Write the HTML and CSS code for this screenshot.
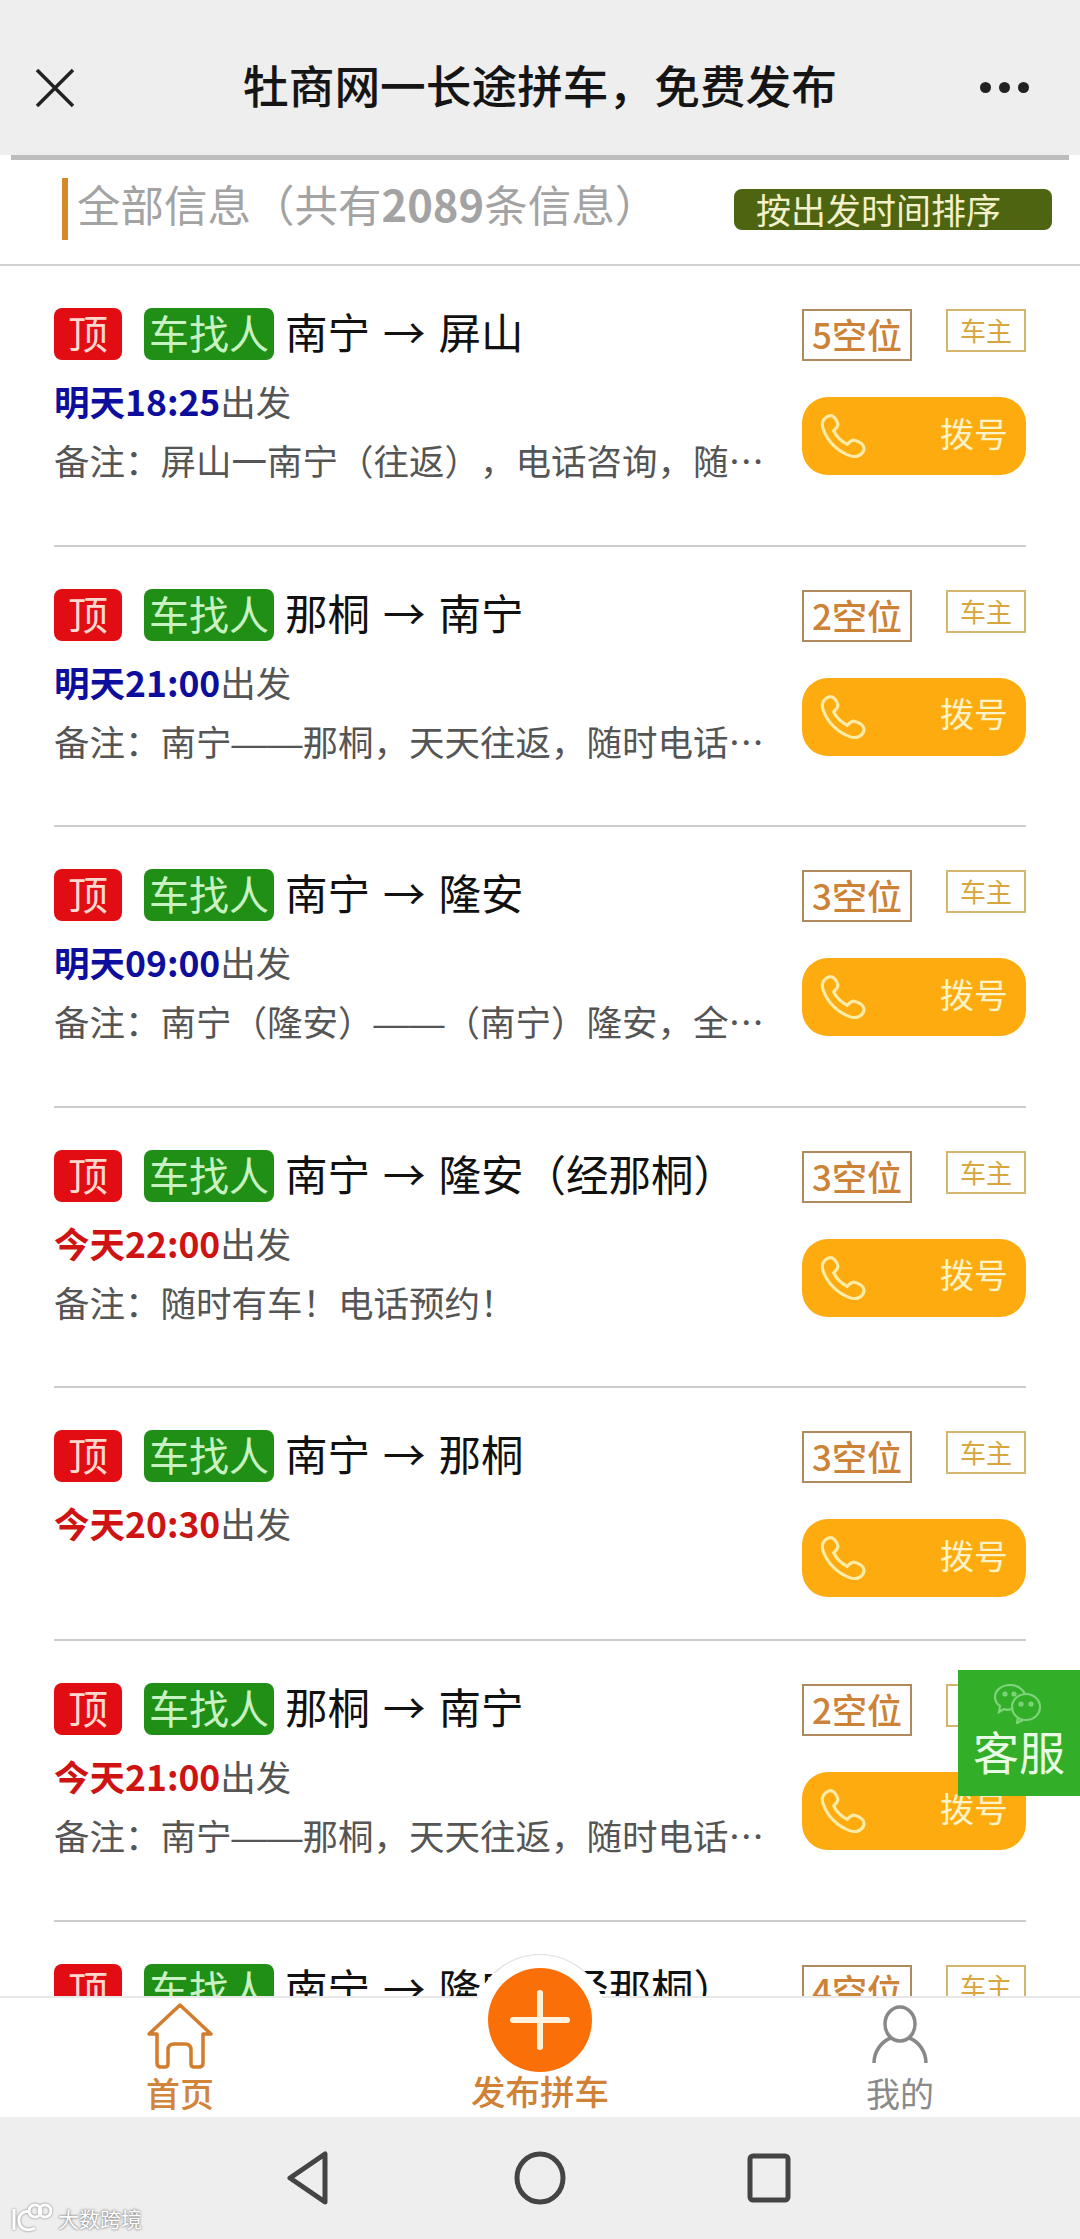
FILE: index.html
```html
<!DOCTYPE html>
<html>
<head lang="zh">
<meta charset="UTF-8">
<title>壮商网一长途拼车，免费发布</title>
<link rel="stylesheet" href="styles.css">
</head>
<body>
<div class="page">
    <div class="titlebar">
        <svg class="close" width="40" height="40" viewBox="0 0 40 40"><path d="M2 2L38 38M38 2L2 38"/></svg>
        <div class="title">牡商网一长途拼车，免费发布</div>
        <div class="more"><i></i><i></i><i></i></div>
    </div>
    <div class="titleline"></div>
    <div class="summary">
        <div class="summary_text">全部信息（共有<b>2089</b>条信息）</div>
        <div class="sort">按出发时间排序</div>
    </div>
    <div class="list">
        <div class="item">
            <div class="info">
                <div class="route"><span class="top_tag">顶</span><span class="type_tag">车找人</span><span class="way">南宁 → 屏山</span></div>
                <div class="time"><b class="blue">明天18:25</b>出发</div>
                <div class="note">备注：屏山一南宁（往返），电话咨询，随时发车欢迎来电</div>
            </div>
            <div class="side">
                <div class="side_top"><span class="seat">5空位</span><span class="owner">车主</span></div>
                <div class="call">
                    <svg class="phone" width="46" height="46" viewBox="0 0 44 44"><path d="M8 3C3 5 1 10 3 15C7 27 17 37 29 41C35 43 41 40 42 35C43 31 38 27 33 26C30 25.500 28 28 26 30C20 27 16 23 13 17C15 15 18 13 17 10C16 6 12 1 8 3Z"/></svg>
                    <span>拨号</span>
                </div>
            </div>
        </div>
        <div class="item">
            <div class="info">
                <div class="route"><span class="top_tag">顶</span><span class="type_tag">车找人</span><span class="way">那桐 → 南宁</span></div>
                <div class="time"><b class="blue">明天21:00</b>出发</div>
                <div class="note">备注：南宁<span class="dash">——</span>那桐，天天往返，随时电话预约欢迎来电</div>
            </div>
            <div class="side">
                <div class="side_top"><span class="seat">2空位</span><span class="owner">车主</span></div>
                <div class="call">
                    <svg class="phone" width="46" height="46" viewBox="0 0 44 44"><path d="M8 3C3 5 1 10 3 15C7 27 17 37 29 41C35 43 41 40 42 35C43 31 38 27 33 26C30 25.500 28 28 26 30C20 27 16 23 13 17C15 15 18 13 17 10C16 6 12 1 8 3Z"/></svg>
                    <span>拨号</span>
                </div>
            </div>
        </div>
        <div class="item">
            <div class="info">
                <div class="route"><span class="top_tag">顶</span><span class="type_tag">车找人</span><span class="way">南宁 → 隆安</span></div>
                <div class="time"><b class="blue">明天09:00</b>出发</div>
                <div class="note">备注：南宁（隆安）<span class="dash">——</span>（南宁）隆安，全天发车欢迎来电</div>
            </div>
            <div class="side">
                <div class="side_top"><span class="seat">3空位</span><span class="owner">车主</span></div>
                <div class="call">
                    <svg class="phone" width="46" height="46" viewBox="0 0 44 44"><path d="M8 3C3 5 1 10 3 15C7 27 17 37 29 41C35 43 41 40 42 35C43 31 38 27 33 26C30 25.500 28 28 26 30C20 27 16 23 13 17C15 15 18 13 17 10C16 6 12 1 8 3Z"/></svg>
                    <span>拨号</span>
                </div>
            </div>
        </div>
        <div class="item">
            <div class="info">
                <div class="route"><span class="top_tag">顶</span><span class="type_tag">车找人</span><span class="way">南宁 → 隆安（经那桐）</span></div>
                <div class="time"><b class="red">今天22:00</b>出发</div>
                <div class="note">备注：随时有车！电话预约！</div>
            </div>
            <div class="side">
                <div class="side_top"><span class="seat">3空位</span><span class="owner">车主</span></div>
                <div class="call">
                    <svg class="phone" width="46" height="46" viewBox="0 0 44 44"><path d="M8 3C3 5 1 10 3 15C7 27 17 37 29 41C35 43 41 40 42 35C43 31 38 27 33 26C30 25.500 28 28 26 30C20 27 16 23 13 17C15 15 18 13 17 10C16 6 12 1 8 3Z"/></svg>
                    <span>拨号</span>
                </div>
            </div>
        </div>
        <div class="item">
            <div class="info">
                <div class="route"><span class="top_tag">顶</span><span class="type_tag">车找人</span><span class="way">南宁 → 那桐</span></div>
                <div class="time"><b class="red">今天20:30</b>出发</div>
            </div>
            <div class="side">
                <div class="side_top"><span class="seat">3空位</span><span class="owner">车主</span></div>
                <div class="call">
                    <svg class="phone" width="46" height="46" viewBox="0 0 44 44"><path d="M8 3C3 5 1 10 3 15C7 27 17 37 29 41C35 43 41 40 42 35C43 31 38 27 33 26C30 25.500 28 28 26 30C20 27 16 23 13 17C15 15 18 13 17 10C16 6 12 1 8 3Z"/></svg>
                    <span>拨号</span>
                </div>
            </div>
        </div>
        <div class="item">
            <div class="info">
                <div class="route"><span class="top_tag">顶</span><span class="type_tag">车找人</span><span class="way">那桐 → 南宁</span></div>
                <div class="time"><b class="red">今天21:00</b>出发</div>
                <div class="note">备注：南宁<span class="dash">——</span>那桐，天天往返，随时电话预约欢迎来电</div>
            </div>
            <div class="side">
                <div class="side_top"><span class="seat">2空位</span><span class="owner">车主</span></div>
                <div class="call">
                    <svg class="phone" width="46" height="46" viewBox="0 0 44 44"><path d="M8 3C3 5 1 10 3 15C7 27 17 37 29 41C35 43 41 40 42 35C43 31 38 27 33 26C30 25.500 28 28 26 30C20 27 16 23 13 17C15 15 18 13 17 10C16 6 12 1 8 3Z"/></svg>
                    <span>拨号</span>
                </div>
            </div>
        </div>
        <div class="item">
            <div class="info">
                <div class="route"><span class="top_tag">顶</span><span class="type_tag">车找人</span><span class="way">南宁 → 隆安（经那桐）</span></div>
            </div>
            <div class="side">
                <div class="side_top"><span class="seat">4空位</span><span class="owner">车主</span></div>
            </div>
        </div>
    </div>
    <div class="tabbar">
        <div class="tab tab_home">
            <svg width="70" height="68" viewBox="-3 -3 70 68"><path d="M9 29H1L32 0L63 29H55V58Q55 62 51 62H46Q43 62 43 59V45Q43 39 37 39H26Q20 39 20 45V59Q20 62 17 62H13Q9 62 9 58Z"/></svg>
            <span>首页</span>
        </div>
        <div class="tab tab_add">
            <div class="add_ring"></div>
            <div class="add_btn">
                <svg width="60" height="60" viewBox="0 0 60 60"><path d="M30 3V57M3 30H57"/></svg>
            </div>
            <span>发布拼车</span>
        </div>
        <div class="tab tab_me">
            <svg width="56" height="60" viewBox="0 0 56 60"><ellipse cx="28" cy="19" rx="15" ry="17"/><path d="M2 58C2 46 10 36 19 33M54 58C54 46 46 36 37 33"/></svg>
            <span>我的</span>
        </div>
    </div>
    <div class="navbar">
        <svg class="nav_back" width="44" height="54" viewBox="0 0 44 54"><path d="M39 3V51L4 27Z"/></svg>
        <svg width="54" height="54" viewBox="0 0 54 54"><ellipse cx="27" cy="27" rx="23" ry="24"/></svg>
        <svg width="44" height="50" viewBox="0 0 44 50"><rect x="3" y="3" width="38" height="44" rx="3"/></svg>
    </div>
    <div class="service">
        <svg width="50" height="40" viewBox="0 0 50 40"><path d="M17 25C15 26 12 26 10 25L5 28L6 22C3 20 1 17 1 13C1 6 8 1 16 1C23 1 29 5 31 10"/><ellipse cx="32" cy="23" rx="14" ry="13"/><path d="M24 34L23 39L29 36"/><circle cx="11" cy="10" r="1.500"/><circle cx="20" cy="10" r="1.500"/><circle cx="27" cy="20" r="1.500"/><circle cx="37" cy="20" r="1.500"/></svg>
        <div class="service_text">客服</div>
    </div>
    <div class="mark">
        <svg width="42" height="30" viewBox="0 0 42 30"><path d="M4 6V27M20 9C12 7 8 13 9 19C10 26 18 29 25 25"/><circle cx="25" cy="8" r="6"/><circle cx="35" cy="8" r="6"/></svg>
        <span>大数跨境</span>
    </div>
</div>
</body>
</html>
```

FILE: styles.css
```css
*{
    margin:0px;
    padding:0px;
    box-sizing:border-box;
}
body{
    background:#fff;
    font-family:"Noto Sans CJK SC","Liberation Sans",sans-serif;
    text-spacing-trim:space-all;
}
.page{
    position:relative;
    width:1080px;
    height:2239px;
    display:flex;
    flex-direction:column;
    overflow:hidden;
}

/* title bar */
.titlebar{
    height:155px;
    padding:20px 35px 0 35px;
    background:#eee;
    display:grid;
    grid-template-columns:1fr auto 1fr;
    align-items:center;
}
.close{
    fill:none;
    stroke:#222;
    stroke-width:3.500;
}
.title{
    font-size:45.700px;
    font-weight:500;
    color:#151515;
    line-height:60px;
    padding-bottom:8px;
}
.more{
    display:flex;
    gap:8px;
    justify-self:end;
    margin-right:16px;
}
.more i{
    width:11px;
    height:11px;
    border-radius:50%;
    background:#222;
}
.titleline{
    height:5px;
    margin:0 11px;
    background:#bdbdbd;
}

/* summary row */
.summary{
    height:106px;
    padding:0 28px 6px 62px;
    border-bottom:2px solid #d0d0d0;
    display:flex;
    align-items:center;
    justify-content:space-between;
}
.summary_text{
    height:62px;
    line-height:52px;
    padding-left:9px;
    border-left:6px solid #d48a2a;
    font-size:43.500px;
    color:#a3a3a3;
}
.sort{
    width:318px;
    height:41px;
    line-height:40px;
    padding-left:22px;
    border-radius:8px;
    background:#4d6410;
    color:#f3f0cc;
    font-size:35px;
    white-space:nowrap;
}

/* list */
.list{
    flex:1;
    min-height:0;
    overflow:hidden;
}
.item{
    margin:0 54px;
    padding:42px 0 42px;
    border-bottom:2px solid #ccc;
    display:flex;
    justify-content:space-between;
}
.info{
    flex:1;
    min-width:0;
    padding-right:34px;
}
.route{
    height:52px;
    display:flex;
    align-items:center;
    white-space:nowrap;
}
.top_tag{
    width:68px;
    height:52px;
    line-height:48px;
    text-align:center;
    border-radius:8px;
    background:#e20d12;
    color:#ffd9d0;
    font-size:40px;
}
.type_tag{
    width:130px;
    height:52px;
    line-height:48px;
    margin-left:22px;
    text-align:center;
    border-radius:8px;
    background:#1f8f16;
    color:#c8f2c2;
    font-size:40px;
}
.way{
    margin-left:11px;
    padding-bottom:7px;
    font-size:42.500px;
    word-spacing:3.500px;
    color:#111;
}
.time{
    height:48px;
    line-height:48px;
    margin-top:17px;
    font-size:35.500px;
    color:#555;
}
.blue{
    color:#0d0d9e;
}
.red{
    color:#cf1212;
}
.note{
    height:50px;
    line-height:50px;
    margin-top:10px;
    margin-bottom:17.500px;
    font-size:35.500px;
    color:#555;
    white-space:nowrap;
    overflow:hidden;
    text-overflow:ellipsis;
}
.dash{
    font-family:"Liberation Sans",sans-serif;
}
.side{
    width:224px;
    margin-top:1px;
    flex-shrink:0;
}
.side_top{
    display:flex;
    justify-content:space-between;
    align-items:flex-start;
}
.seat{
    width:110px;
    height:52px;
    line-height:46px;
    text-align:center;
    border:2px solid #b08a5a;
    color:#cc8237;
    font-size:35px;
    font-weight:500;
}
.owner{
    width:80px;
    height:43px;
    line-height:38px;
    text-align:center;
    border:2px solid #d6b66c;
    color:#d8a63c;
    font-size:26px;
}
.call{
    height:78px;
    margin-top:36px;
    padding:0 18px 0 18px;
    border-radius:26px;
    background:#fdab0e;
    color:#fdf3c8;
    font-size:34px;
    display:flex;
    align-items:center;
    justify-content:space-between;
}
.call span{
    padding-bottom:8px;
}
.phone{
    fill:none;
    stroke:#fdeca8;
    stroke-width:3;
}

/* tab bar */
.tabbar{
    position:relative;
    height:121px;
    flex-shrink:0;
    padding-bottom:3px;
    border-top:2px solid #e8e8e8;
    background:#fff;
    display:grid;
    grid-template-columns:1fr 1fr 1fr;
}
.tab{
    position:relative;
    display:flex;
    flex-direction:column;
    align-items:center;
    justify-content:flex-end;
    font-size:34px;
    font-weight:500;
    line-height:42px;
    white-space:nowrap;
}
.tab svg{
    fill:none;
    stroke-width:3.500;
}
.tab_home{
    color:#d0853a;
}
.tab_home svg{
    stroke:#d27d2d;
    stroke-linejoin:round;
    margin-bottom:2px;
}
.tab_add{
    color:#cf8135;
}
.tab_add span{
    position:relative;
    font-size:34.500px;
    padding-bottom:3px;
}
.tab_me{
    color:#8a8a8a;
    font-weight:400;
}
.tab_me svg{
    stroke:#888;
    margin-bottom:7px;
}
.add_ring{
    position:absolute;
    left:114px;
    top:-44px;
    width:132px;
    height:132px;
    border-radius:50%;
    background:#fff;
    border:1px solid transparent;
    border-top-color:#e0e0e0;
}
.add_btn{
    position:absolute;
    left:128px;
    top:-30px;
    width:104px;
    height:104px;
    border-radius:50%;
    background:#fb6f08;
    display:flex;
    align-items:center;
    justify-content:center;
}
.add_btn svg{
    stroke:#fff3df;
    stroke-width:6;
    stroke-linecap:round;
}

/* phone buttons */
.navbar{
    height:122px;
    flex-shrink:0;
    padding-right:4px;
    background:#eee;
    display:flex;
    align-items:center;
    justify-content:center;
    gap:180px;
}
.navbar svg{
    fill:none;
    stroke:#444;
    stroke-width:5;
    stroke-linejoin:round;
}
.nav_back{
    margin-right:3px;
}

/* things on top */
.service{
    position:absolute;
    right:0px;
    top:1670px;
    width:122px;
    height:126px;
    padding-top:14px;
    background:#33ae28;
    text-align:center;
}
.service svg{
    display:block;
    margin:0 auto;
    fill:none;
    stroke:#7ed47a;
    stroke-width:2.200;
}
.service_text{
    font-size:46px;
    line-height:52px;
    color:#e8fbe4;
}
.mark{
    position:absolute;
    left:10px;
    bottom:6px;
    display:flex;
    align-items:center;
    gap:6px;
    color:#fff;
    font-size:21px;
    text-shadow:0 0 2px #777,0 0 3px #999;
}
.mark svg{
    fill:none;
    stroke:#fff;
    stroke-width:3;
    filter:drop-shadow(0 0 1px #777);
}
```
